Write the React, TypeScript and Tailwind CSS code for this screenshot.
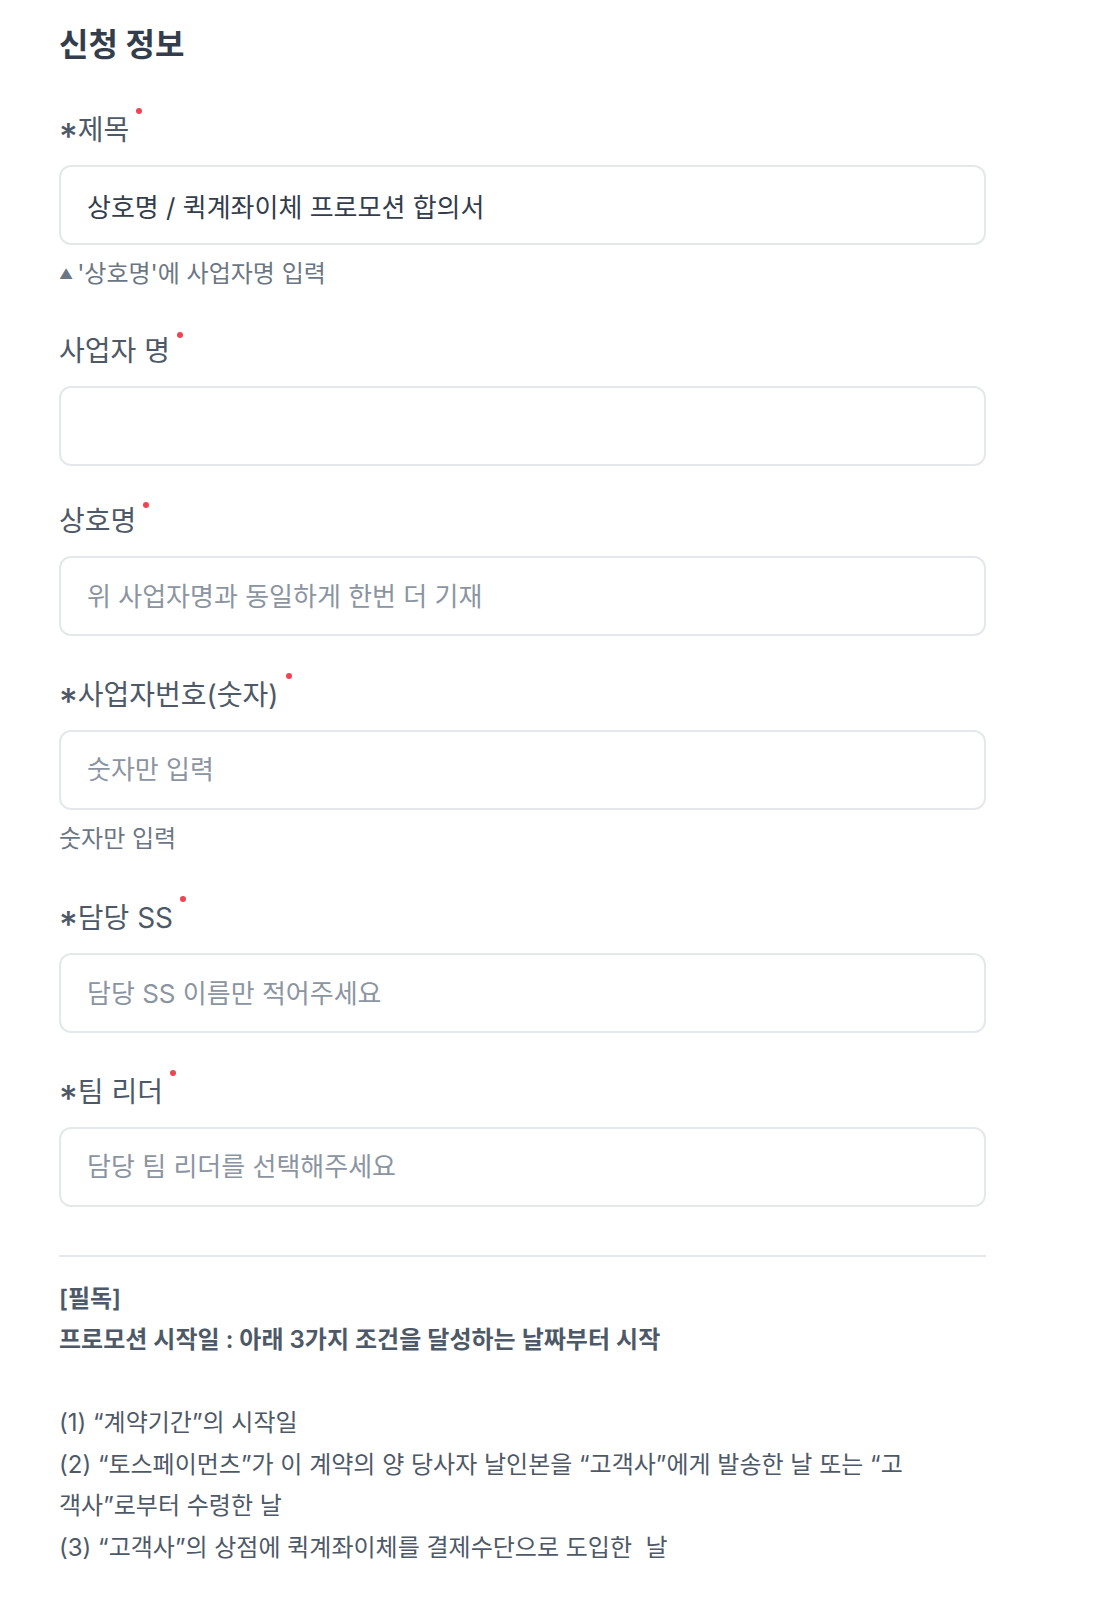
import React from 'react'

type Field = {
  label: string
  required?: boolean
  value?: string
  placeholder?: string
  help?: React.ReactNode
}

const fields: Field[] = [
  {
    label: '제목',
    required: true,
    value: '상호명 / 퀵계좌이체 프로모션 합의서',
    help: (
      <>
        <span className="mr-[4px] inline-block text-[14px] align-[3px]">▲</span>
        '상호명'에 사업자명 입력
      </>
    ),
  },
  { label: '사업자 명' },
  { label: '상호명', placeholder: '위 사업자명과 동일하게 한번 더 기재' },
  { label: '사업자번호(숫자)', required: true, placeholder: '숫자만 입력', help: '숫자만 입력' },
  { label: '담당 SS', required: true, placeholder: '담당 SS 이름만 적어주세요' },
  { label: '팀 리더', required: true, placeholder: '담당 팀 리더를 선택해주세요' },
]

function FormField({ field, first }: { field: Field; first: boolean }) {
  return (
    <div className={`flex flex-col ${first ? 'mt-[44px]' : 'mt-[37.5px]'}`}>
      <label className="mb-[17px] flex items-start text-[28px] leading-[36px] text-[#4e5968]">
        <span>
          {field.required && (
            <span className="inline-block translate-y-[9px] text-[36px] font-medium leading-none">*</span>
          )}
          {field.label}
        </span>
        <span className="ml-[7px] mt-[-1px] h-[6px] w-[6px] rounded-full bg-[#f04452]" />
      </label>
      <input
        readOnly
        defaultValue={field.value}
        placeholder={field.placeholder}
        className="h-[80px] w-full rounded-xl border-2 border-[#e5e8eb] bg-white px-[26px] text-[26px] text-[#333d4b] outline-none placeholder:text-[#8b95a1]"
      />
      {field.help && (
        <p className="mb-[5px] mt-[13px] text-[24px] leading-[32px] text-[#6b7684]">{field.help}</p>
      )}
    </div>
  )
}

export default function App() {
  return (
    <div className="min-h-[1600px] bg-white pl-[59px] pt-[25px] font-['Inter','Noto_Sans_CJK_KR',sans-serif]">
      <div className="flex w-[927px] flex-col">
        <h2 className="text-[32px] font-bold leading-[40px] text-[#333d4b]">신청 정보</h2>

        {fields.map((field, i) => (
          <FormField key={field.label} field={field} first={i === 0} />
        ))}

        <div className="mt-[48px] h-[2px] bg-[#e5e8eb]" />

        <div className="mt-[21px] w-[850px] text-[24px] leading-[41.5px] text-[#4e5968]">
          <p className="font-semibold">[필독]</p>
          <p className="font-semibold">프로모션 시작일 : 아래 3가지 조건을 달성하는 날짜부터 시작</p>
          <div className="h-[41.5px]" />
          <p>(1) “계약기간”의 시작일</p>
          <p>
            (2) “토스페이먼츠”가 이 계약의 양 당사자 날인본을 “고객사”에게 발송한 날 또는 “고객사”로부터 수령한 날
          </p>
          <p>(3) “고객사”의 상점에 퀵계좌이체를 결제수단으로 도입한&nbsp; 날</p>
        </div>
      </div>
    </div>
  )
}
